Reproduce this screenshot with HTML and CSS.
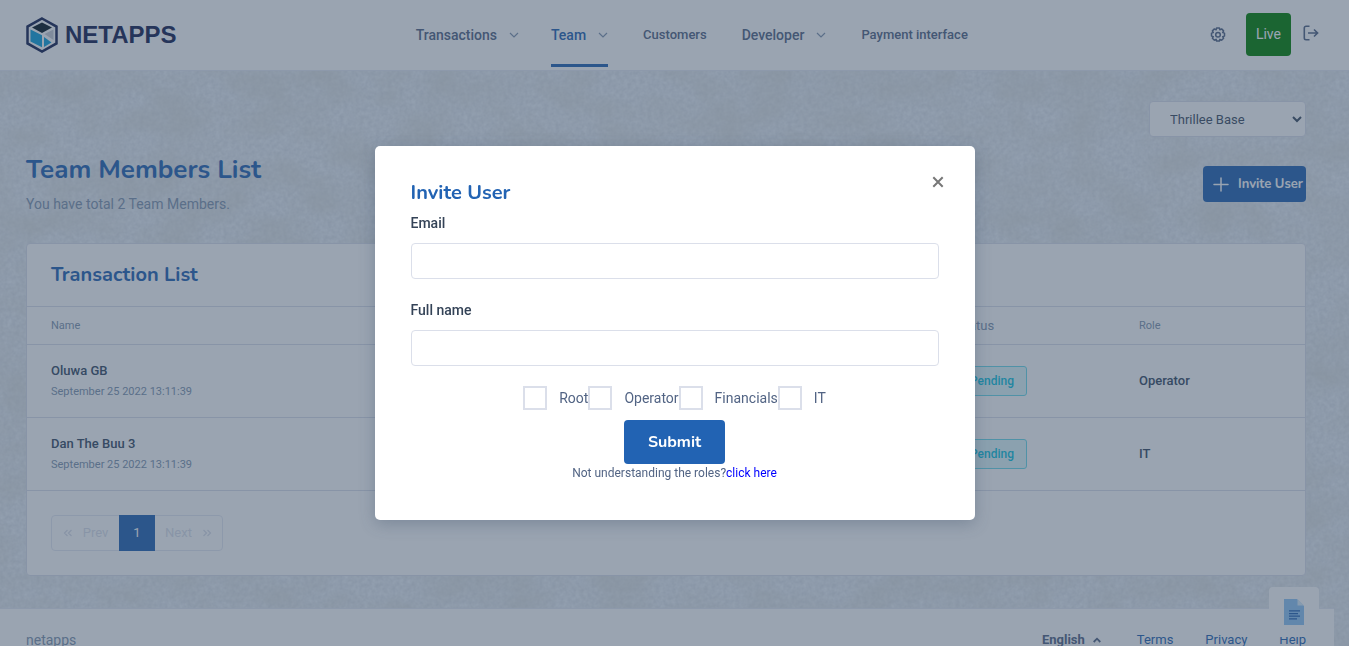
FILE: index.html
```html
<!DOCTYPE html>
<html lang="en">
<head>
<meta charset="utf-8">
<title>Team Members - Netapps</title>
<link rel="stylesheet" href="styles.css">
</head>
<body>
<div class="page">
  <svg class="texture" aria-hidden="true">
    <filter id="grain" x="0" y="0" width="100%" height="100%" color-interpolation-filters="sRGB">
      <feTurbulence type="fractalNoise" baseFrequency="0.25" numOctaves="3" seed="4" result="fine"/>
      <feColorMatrix in="fine" values="0.11 0 0 0 0.845  0.11 0 0 0 0.868  0.1 0 0 0 0.9  0 0 0 0 1" result="base"/>
      <feTurbulence type="fractalNoise" baseFrequency="0.02 0.03" numOctaves="5" seed="9" result="wide"/>
      <feColorMatrix in="wide" values="0 0 0 0 0.85  0 0 0 0 0.86  0 0 0 0 0.85  1.2 0 0 0 -0.4" result="stain"/>
      <feMerge><feMergeNode in="base"/><feMergeNode in="stain"/></feMerge>
    </filter>
    <rect width="100%" height="100%" filter="url(#grain)"/>
  </svg>

  <header class="header">
    <a class="logo" href="#">
      <svg width="32" height="36" viewBox="0 0 32 36" aria-hidden="true">
        <path d="M16 1.500 30.500 9.600v16.800L16 34.500 1.500 26.400V9.600z" fill="#fff" stroke="#142050" stroke-width="2.500"/>
        <path d="M16 5.500 26 10.500 16 16 6 10.500z" fill="#04141f"/>
        <path d="M4.500 12.500 16 18.300V30.300L4.500 24.500z" fill="#0ca0dc"/>
        <path d="M18.500 17 27.500 12.500V23z" fill="#c8cdd4"/>
        <path d="M18 20 25.500 25.500 18 30z" fill="#0ca0dc"/>
      </svg>
      <span>NETAPPS</span>
    </a>
    <nav class="nav">
      <a class="nav-link" href="#">Transactions<svg class="chevron" viewBox="0 0 10 10"><path d="M1 3l4 4 4-4"/></svg></a>
      <a class="nav-link active" href="#">Team<svg class="chevron" viewBox="0 0 10 10"><path d="M1 3l4 4 4-4"/></svg></a>
      <a class="nav-link plain" href="#">Customers</a>
      <a class="nav-link" href="#">Developer<svg class="chevron" viewBox="0 0 10 10"><path d="M1 3l4 4 4-4"/></svg></a>
      <a class="nav-link plain" href="#">Payment interface</a>
    </nav>
    <div class="actions">
      <button class="icon-button" type="button" aria-label="Settings">
        <svg width="16" height="16" viewBox="0 0 16 16" fill="none" stroke="currentColor" stroke-width="1.500" stroke-linejoin="round"><path d="M6.600 1h2.800l.5 1.800 1.700-.9 2 2-.9 1.700 1.800.5v3l-1.800.5.9 1.600-2 2-1.700-.9-.5 1.800H6.600l-.5-1.800-1.700.9-2-2 .9-1.600-1.800-.5v-3l1.800-.5-.9-1.700 2-2 1.700.9z"/><circle cx="8" cy="7.700" r="2.300"/></svg>
      </button>
      <button class="live" type="button">Live</button>
      <button class="icon-button logout" type="button" aria-label="Log out">
        <svg width="16" height="16" viewBox="0 0 16 16" fill="none" stroke="currentColor" stroke-width="1.600"><path d="M6.500 1.300H3A1.700 1.700 0 0 0 1.300 3v10A1.700 1.700 0 0 0 3 14.700h3.500M5 8h9.500M11 4.500 14.600 8 11 11.500"/></svg>
      </button>
    </div>
  </header>

  <main class="main">
    <div class="toolbar">
      <select class="business" aria-label="Business"><option>Thrillee Base</option></select>
    </div>
    <div class="page-head">
      <div>
        <h1 class="page-title">Team Members List</h1>
        <p class="page-sub">You have total 2 Team Members.</p>
      </div>
      <button class="invite" type="button">
        <svg width="16" height="16" viewBox="0 0 16 16" stroke="currentColor" stroke-width="1.500" stroke-linecap="round"><path d="M8 2v13M1 8.500h14"/></svg>
        <span>Invite User</span>
      </button>
    </div>
    <section class="card">
      <h2 class="card-title">Transaction List</h2>
      <table class="members">
        <thead>
          <tr><th class="small">Name</th><th class="status">Status</th><th class="role small">Role</th></tr>
        </thead>
        <tbody>
          <tr>
            <td><div class="name">Oluwa GB</div><div class="date">September 25 2022 13:11:39</div></td>
            <td><span class="badge">Pending</span></td>
            <td class="name">Operator</td>
          </tr>
          <tr>
            <td><div class="name">Dan The Buu 3</div><div class="date">September 25 2022 13:11:39</div></td>
            <td><span class="badge">Pending</span></td>
            <td class="name">IT</td>
          </tr>
        </tbody>
      </table>
      <div class="pager">
        <button class="step" type="button" disabled><svg class="double" viewBox="0 0 10 10"><path d="M4.500 2l-3 3 3 3M8.500 2l-3 3 3 3"/></svg>Prev</button>
        <button class="current" type="button">1</button>
        <button class="step" type="button" disabled>Next<svg class="double" viewBox="0 0 10 10"><path d="M1.500 2l3 3-3 3M5.500 2l3 3-3 3"/></svg></button>
      </div>
    </section>
  </main>

  <footer class="footer">
    <span class="brand">netapps</span>
    <nav class="footer-nav">
      <button class="language" type="button">English<svg width="8" height="6" viewBox="0 0 8 6" fill="none" stroke="currentColor" stroke-width="1.800"><path d="M.7 5 4 1.700 7.300 5"/></svg></button>
      <a href="#">Terms</a>
      <a href="#">Privacy</a>
      <a href="#">Help</a>
    </nav>
  </footer>
  <button class="docs" type="button" aria-label="Documents">
    <svg width="20" height="26" viewBox="0 0 20 26"><path d="M0 0h13l7 7v19H0z" fill="#8fc4f5"/><path d="M13.500 0v6.500H20z" fill="#d8ecfb"/><path d="M5 11.800h11M5 14.600h9M5 17.200h11M5 19.800h8" stroke="#2263b3" stroke-width="1.300"/></svg>
  </button>
</div>

<div class="overlay">
  <form class="modal" role="dialog" aria-labelledby="invite-title">
    <button class="close" type="button" aria-label="Close"><svg width="12" height="12" viewBox="0 0 12 12" stroke="currentColor" stroke-width="2"><path d="M1.300 1.300l9.400 9.400M10.700 1.300l-9.400 9.400"/></svg></button>
    <h2 class="modal-title" id="invite-title">Invite User</h2>
    <div class="field">
      <label for="email">Email</label>
      <input id="email" type="email">
    </div>
    <div class="field">
      <label for="fullname">Full name</label>
      <input id="fullname" type="text">
    </div>
    <div class="roles">
      <label><input type="checkbox">Root</label>
      <label><input type="checkbox">Operator</label>
      <label><input type="checkbox">Financials</label>
      <label><input type="checkbox">IT</label>
    </div>
    <button class="submit" type="submit">Submit</button>
    <p class="hint">Not understanding the roles?<a href="#">click here</a></p>
  </form>
</div>
</body>
</html>
```
FILE: styles.css
```css
* {
  box-sizing: border-box;
}

html,
body {
  height: 100%;
  margin: 0;
  overflow: hidden;
}

body {
  font-family: Roboto, sans-serif;
  font-size: 14px;
  line-height: 22px;
  color: #526484;
}

h1,
h2,
p {
  margin: 0;
}

a {
  text-decoration: none;
}

button,
input,
select {
  font: inherit;
  margin: 0;
}

button {
  border: 0;
  padding: 0;
  background: none;
  color: inherit;
}

.page {
  position: relative;
  height: 100%;
  overflow: hidden;
  isolation: isolate;
}

.texture {
  position: absolute;
  inset: 0;
  width: 100%;
  height: 100%;
  z-index: -1;
}

/* Header */
.header {
  display: flex;
  align-items: center;
  justify-content: space-between;
  height: 71px;
  padding: 0 30px 0 26px;
  background: #fff;
  border-bottom: 1px solid #e5e9f2;
}

.logo {
  display: flex;
  align-items: center;
  gap: 7px;
  font: bold 24px "Liberation Sans", Arial, sans-serif;
  color: #142050;
}

.nav {
  display: flex;
  gap: 32px;
  align-self: stretch;
}

.nav-link {
  display: flex;
  align-items: center;
  gap: 12px;
  height: 67px;
  padding-top: 5px;
  border-bottom: 3px solid transparent;
  font-weight: 500;
  color: #526484;
}

.nav-link.plain {
  padding: 6px 3px 0;
  font-size: 13px;
}

.nav-link.active {
  color: #2263b3;
  border-color: #2263b3;
}

.chevron {
  width: 10px;
  height: 10px;
  fill: none;
  stroke: #8094ae;
  stroke-width: 1.2;
}

.actions {
  display: flex;
  align-items: center;
  color: #526484;
}

.icon-button {
  display: flex;
}

.live {
  height: 43px;
  margin: 0 12px 2px 20px;
  padding: 0 10px;
  border-radius: 4px;
  background: #008000;
  color: #fff;
}

.logout {
  margin-bottom: 4px;
}

/* Content */
.main {
  padding: 30px 43px 32px 26px;
}

.toolbar {
  display: flex;
  justify-content: flex-end;
}

.business {
  width: 157px;
  height: 36px;
  padding: 0 0 0 16px;
  border: 1px solid #dbdfea;
  border-radius: 4px;
  background: #fff;
  color: #3c4d62;
  font-size: 13px;
}

.page-head {
  display: flex;
  justify-content: space-between;
  align-items: center;
  margin: 15px 0 27px;
}

.page-title {
  font: bold 26px/36px Nunito, Lato, sans-serif;
  color: #2263b3;
}

.page-sub {
  margin-top: 4px;
  line-height: 24px;
  color: #8094ae;
}

.invite {
  display: flex;
  align-items: center;
  gap: 9px;
  width: 103px;
  height: 36px;
  padding-left: 10px;
  border-radius: 4px;
  background: #2263b3;
  color: #fff;
  font: bold 13px/20px Nunito, Lato, sans-serif;
  white-space: nowrap;
}

.invite svg {
  flex: none;
}

.card {
  background: #fff;
  border: 1px solid #dbdfea;
  border-radius: 4px;
}

.card-title {
  padding: 19px 24px;
  font: bold 20px/24px Nunito, Lato, sans-serif;
  color: #2263b3;
}

.members {
  width: 100%;
  border-collapse: collapse;
  table-layout: fixed;
}

.members th {
  height: 38px;
  padding: 0 12px;
  border: solid #dbdfea;
  border-width: 1px 0;
  text-align: left;
  font-size: 13px;
  font-weight: 400;
  color: #8094ae;
}

.members th.small {
  font-size: 11px;
}

.members td {
  height: 73px;
  padding: 0 12px;
  border-bottom: 1px solid #dbdfea;
}

.members th:first-child,
.members td:first-child {
  padding-left: 24px;
}

.status {
  width: 182px;
}

.role {
  width: 178px;
}

.name {
  font-size: 13px;
  font-weight: 500;
  color: #364a63;
}

.date {
  font-size: 11px;
  line-height: 20px;
  color: #8094ae;
}

.badge {
  display: inline-block;
  padding: 4px 12px;
  border: 1px solid #6bdbea;
  border-radius: 3px;
  background: #e1f8fb;
  font-size: 12px;
  line-height: 20px;
  font-weight: 500;
  color: #09c2de;
}

.pager {
  display: flex;
  width: max-content;
  margin: 24px;
  border: 1px solid #e5e9f2;
  border-radius: 4px;
  font-size: 13px;
}

.step {
  display: flex;
  align-items: center;
  justify-content: center;
  gap: 10px;
  width: 67px;
  height: 34px;
  color: #dbdfea;
}

.double {
  width: 10px;
  height: 10px;
  fill: none;
  stroke: currentColor;
  stroke-width: 1.3;
}

.current {
  width: 36px;
  height: 36px;
  margin: -1px 0;
  background: #2263b3;
  color: #fff;
}

/* Footer */
.footer {
  display: flex;
  justify-content: space-between;
  margin-right: 15px;
  padding: 20px 28px 20px 26px;
  background: #fff;
  border-top: 1px solid #e5e9f2;
}

.brand {
  color: #8094ae;
}

.footer-nav {
  display: flex;
  gap: 32px;
  font-size: 13px;
}

.footer-nav a {
  color: #2263b3;
}

.language {
  display: flex;
  align-items: center;
  gap: 8px;
  margin-right: 4px;
  font-weight: 700;
  color: #526484;
}

.docs {
  position: absolute;
  right: 30px;
  bottom: 9px;
  display: grid;
  place-items: center;
  width: 50px;
  height: 50px;
  border-radius: 4px;
  background: #fff;
}

/* Modal */
.overlay {
  position: fixed;
  inset: 0;
  display: flex;
  align-items: center;
  justify-content: center;
  padding-top: 20px;
  background: rgba(54, 74, 99, 0.5);
}

.modal {
  position: relative;
  width: 600px;
  max-width: 100%;
  padding: 36px 36px 38px;
  border-radius: 5px;
  background: #fff;
  box-shadow: 0 4px 16px rgba(54, 74, 99, 0.3);
}

.close {
  position: absolute;
  top: 30px;
  right: 31px;
  display: flex;
  color: #777;
}

.modal-title {
  margin-bottom: 8px;
  font: bold 20px/22px Nunito, Lato, sans-serif;
  color: #2263b3;
}

.field {
  display: grid;
  gap: 9px;
  margin-bottom: 20px;
}

.field label {
  font-weight: 500;
  color: #344357;
}

.field input {
  width: 100%;
  height: 36px;
  padding: 0 16px;
  border: 1px solid #dbdfea;
  border-radius: 4px;
  background: #fff;
}

.roles {
  display: flex;
  justify-content: center;
}

.roles label {
  display: flex;
  align-items: center;
  gap: 12px;
}

.roles input {
  appearance: none;
  width: 24px;
  height: 24px;
  border: 2px solid #dbdfea;
  background: #fff;
}

.submit {
  display: block;
  height: 44px;
  margin: 10px auto 0;
  padding: 0 24px;
  border-radius: 4px;
  background: #2263b3;
  color: #fff;
  font: bold 16px/20px Nunito, Lato, sans-serif;
}

.hint {
  font-size: 12px;
  line-height: 18px;
  text-align: center;
}

.hint a {
  color: #00f;
}
```
